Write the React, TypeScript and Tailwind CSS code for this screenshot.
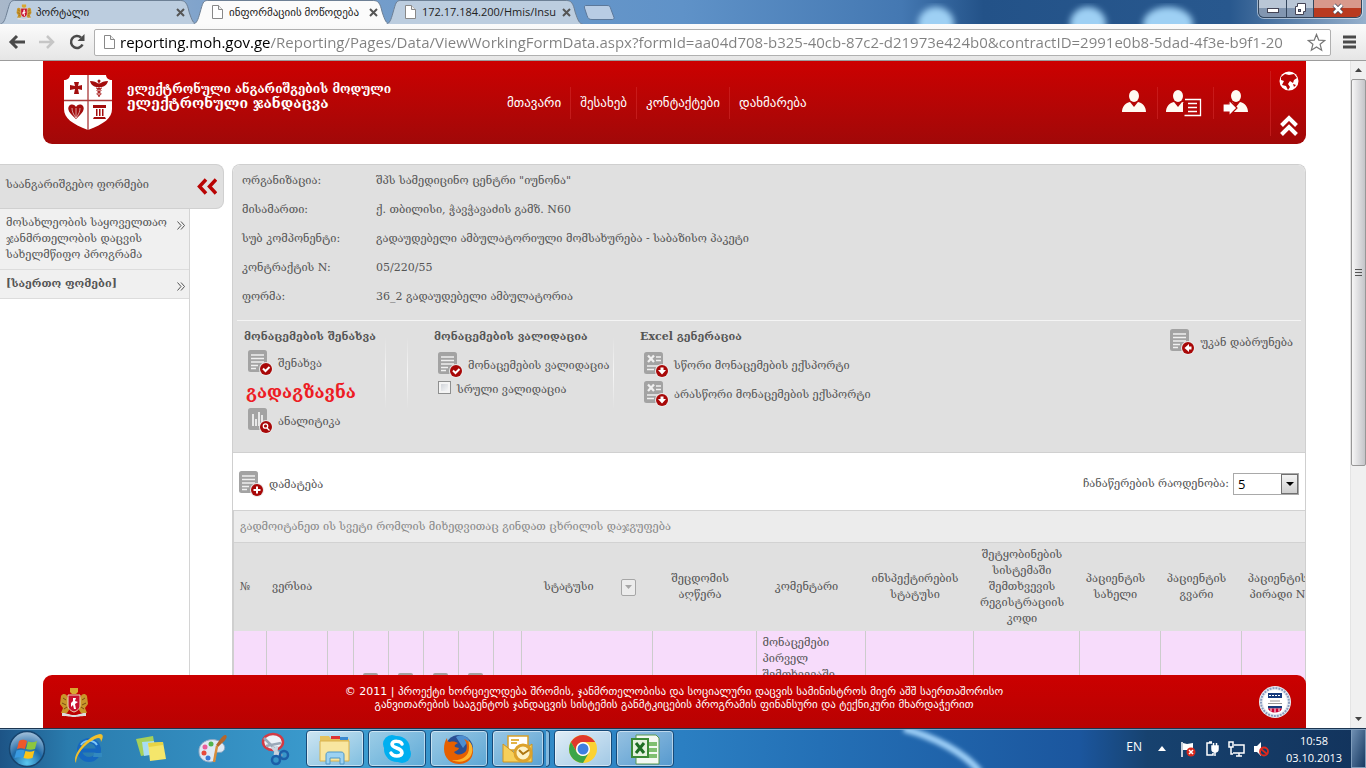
import type { ReactNode } from "react";

const SERIF = "font-['DejaVu_Serif','Noto_Sans',serif]";
const SANS = "font-['DejaVu_Sans','Noto_Sans',sans-serif]";
const UI = "font-['Open_Sans','Noto_Sans','DejaVu_Sans',sans-serif]";

const NAV = ["მთავარი", "შესახებ", "კონტაქტები", "დახმარება"];

const DETAILS = [
  { id: "org", label: "ორგანიზაცია:", value: 'შპს სამედიცინო ცენტრი "იუნონა"' },
  { id: "address", label: "მისამართი:", value: "ქ. თბილისი, ჭავჭავაძის გამზ. N60" },
  {
    id: "sub",
    label: "სუბ კომპონენტი:",
    value: "გადაუდებელი ამბულატორიული მომსახურება - საბაზისო პაკეტი",
  },
  { id: "contract", label: "კონტრაქტის N:", value: "05/220/55" },
  { id: "form", label: "ფორმა:", value: "36_2 გადაუდებელი ამბულატორია" },
];

const COLUMNS = [
  { id: "no", title: "№", width: "w-[32px]", align: "text-left" },
  { id: "version", title: "ვერსია", width: "w-[61px]", align: "text-left" },
  { id: "a", title: "", width: "w-[26px]", align: "text-left" },
  { id: "b", title: "", width: "w-[35px]", align: "text-left", tool: true },
  { id: "c", title: "", width: "w-[35px]", align: "text-left", tool: true },
  { id: "d", title: "", width: "w-[35px]", align: "text-left", tool: true },
  { id: "e", title: "", width: "w-[35px]", align: "text-left", tool: true },
  { id: "f", title: "", width: "w-[28px]", align: "text-left" },
  { id: "status", title: "სტატუსი", width: "w-[131px]", align: "text-center", filter: true },
  { id: "error", title: "შეცდომის აღწერა", width: "w-[104px]", align: "text-center" },
  {
    id: "comment",
    title: "კომენტარი",
    width: "w-[109px]",
    align: "text-center",
    value: "მონაცემები პირველ შემთხვევაში",
  },
  { id: "inspection", title: "ინსპექტირების სტატუსი", width: "w-[108px]", align: "text-center" },
  {
    id: "code",
    title: "შეტყობინების სისტემაში შემთხვევის რეგისტრაციის კოდი",
    width: "w-[106px]",
    align: "text-center",
  },
  { id: "name", title: "პაციენტის სახელი", width: "w-[81px]", align: "text-center" },
  { id: "surname", title: "პაციენტის გვარი", width: "w-[81px]", align: "text-center" },
  { id: "pid", title: "პაციენტის პირადი N", width: "w-[81px]", align: "text-center" },
];

/* Browser frame */

function PageIcon() {
  return (
    <svg width="13" height="16" viewBox="0 0 13 16" className="shrink-0">
      <path d="M1.500 1.500h6l4 4v9h-10z" fill="#fff" stroke="#888" />
      <path d="M7.500 1.500v4h4" fill="#eee" stroke="#888" />
    </svg>
  );
}

function CrestIcon({ size }: { size: number }) {
  return (
    <svg width={size} height={size} viewBox="0 0 30 30" className="shrink-0">
      <path d="M11 1h8v4l-2 2h-4l-2-2z" fill="#d8a72f" />
      <path d="M2 9c2-3 5-2 6 0l2 4v10l-2 3H2l2-5-3-4z" fill="#c9962a" />
      <path d="M28 9c-2-3-5-2-6 0l-2 4v10l2 3h6l-2-5 3-4z" fill="#c9962a" />
      <path d="M4 11l3 2M3 16l4 2M26 11l-3 2M27 16l-4 2M5 22l3-2M25 22l-3-2" stroke="#7a4a12" strokeWidth="1" />
      <path d="M9 8h12v10c0 4-3 6-6 7-3-1-6-3-6-7z" fill="#c8102e" stroke="#e8dcb8" />
      <path d="M14 11h3l-1 3 3 1-3 2 1 5h-2l-1-4-2 2v-4l2-2z" fill="#fff" />
      <path d="M3 26c6 0 7 2 12 2s6-2 12-2v3c-6 0-8 1-12 1s-6-1-12-1z" fill="#ddd" />
    </svg>
  );
}

function Tab({ title, icon, active }: { title: string; icon: ReactNode; active?: boolean }) {
  return (
    <div className="relative -mr-1 flex h-6 w-[197px] min-w-0 shrink items-center gap-1 pl-4 pr-3">
      <svg viewBox="0 0 200 24" preserveAspectRatio="none" className="absolute inset-0 h-full w-full">
        <path
          d="M0 24.500C4 23 5 20 7 13C10 3 10 .5 15 .5H183C188 .5 190 3 192 12C195 21 196 23 200 24.500"
          fill={active ? "#fbfbfb" : "#bccddf"}
          stroke="#6d7f94"
        />
      </svg>
      <span className="relative flex w-4 shrink-0 justify-center">{icon}</span>
      <span className="relative min-w-0 flex-1 overflow-hidden whitespace-nowrap text-[11px] text-[#222]">
        {title}
      </span>
      <button type="button" aria-label="Close" className="relative text-[#555]">
        <svg width="9" height="9" viewBox="0 0 9 9">
          <path d="M1 1l7 7M8 1l-7 7" stroke="currentColor" strokeWidth="2" />
        </svg>
      </button>
    </div>
  );
}

function WindowButtons() {
  return (
    <div className="relative mr-1 flex h-[18px] shrink-0 self-start overflow-hidden rounded-b-md border border-t-0 border-[#34465c] shadow-[0_0_0_1px_rgba(255,255,255,0.5)]">
      <button type="button" aria-label="Minimize" className="flex w-7 items-center justify-center border-r border-[#34465c] bg-linear-to-b from-[#b9c6d6] from-50% to-[#8296b0] to-50%">
        <svg width="14" height="12" viewBox="0 0 14 12">
          <rect x="1.500" y="5.500" width="11" height="4" fill="#fff" stroke="#445" />
        </svg>
      </button>
      <button type="button" aria-label="Restore" className="flex w-[27px] items-center justify-center border-r border-[#34465c] bg-linear-to-b from-[#b9c6d6] from-50% to-[#8296b0] to-50%">
        <svg width="14" height="12" viewBox="0 0 14 12">
          <path d="M4.500.5h8v8h-2v3h-8v-8h2z" fill="#fff" stroke="#445" />
          <rect x="5.500" y="6.500" width="2" height="2" fill="#8296b0" stroke="#445" />
        </svg>
      </button>
      <button type="button" aria-label="Close window" className="flex w-[47px] items-center justify-center bg-linear-to-b from-[#d8998c] from-50% to-[#b93a20] to-50%">
        <svg width="14" height="12" viewBox="0 0 14 12">
          <path d="M3 2l8 8M11 2l-8 8" stroke="#445" strokeWidth="4" />
          <path d="M3 2l8 8M11 2l-8 8" stroke="#fff" strokeWidth="2.500" />
        </svg>
      </button>
    </div>
  );
}

function BrowserFrame() {
  return (
    <div className={`shrink-0 ${UI}`}>
      <div className="relative flex h-6 items-end overflow-hidden">
        <svg viewBox="0 0 1366 24" preserveAspectRatio="none" className="absolute inset-0 h-full w-full">
          <defs>
            <linearGradient id="sky" x1="0" x2="1">
              <stop offset="0" stopColor="#a9b8ca" />
              <stop offset=".15" stopColor="#7fa3cc" />
              <stop offset=".5" stopColor="#5f92c8" />
              <stop offset=".66" stopColor="#4478b2" />
              <stop offset=".72" stopColor="#235288" />
              <stop offset=".9" stopColor="#28588e" />
              <stop offset="1" stopColor="#96b0cc" />
            </linearGradient>
            <filter id="soft">
              <feGaussianBlur stdDeviation="3" />
            </filter>
          </defs>
          <rect width="1366" height="24" fill="url(#sky)" />
          <g fill="#9ed0f4" filter="url(#soft)">
            <ellipse cx="936" cy="24" rx="18" ry="17" />
            <ellipse cx="1088" cy="24" rx="18" ry="17" />
            <ellipse cx="1168" cy="24" rx="25" ry="17" />
          </g>
        </svg>
        <Tab title="პორტალი" icon={<CrestIcon size={16} />} />
        <Tab title="ინფორმაციის მოწოდება" icon={<PageIcon />} active />
        <Tab title="172.17.184.200/Hmis/Insu" icon={<PageIcon />} />
        <button type="button" aria-label="New tab" className="relative mb-1 ml-1 shrink-0">
          <svg width="32" height="15" viewBox="0 0 32 15">
            <path d="M3 .5h21c3 0 3 1 4 4l3 8c0 2-1 2-2 2H9c-3 0-4-1-5-4L1.500 3C1 1 2 .5 3 .5z" fill="#b8cce4" stroke="#5c789a" />
          </svg>
        </button>
        <div className="flex-1" />
        <WindowButtons />
      </div>
      <div className="flex h-[37px] items-center border-b border-[#9c9c9c] bg-linear-to-b from-[#fbfbfb] to-[#e6e6e6] pl-2 pr-2.5">
        <button type="button" aria-label="Back" className="mr-3">
          <svg width="18" height="16" viewBox="0 0 18 16" fill="none" stroke="#4a4a4a" strokeWidth="3">
            <path d="M17 8H4M9 2L3 8l6 6" />
          </svg>
        </button>
        <button type="button" aria-label="Forward" className="mr-3">
          <svg width="18" height="16" viewBox="0 0 18 16" fill="none" stroke="#c6c6c6" strokeWidth="2.500">
            <path d="M1 8h13M9 2l6 6-6 6" />
          </svg>
        </button>
        <button type="button" aria-label="Reload" className="mr-2">
          <svg width="18" height="18" viewBox="0 0 18 18" fill="none" stroke="#4a4a4a" strokeWidth="2.500">
            <path d="M14.500 11.500A6 6 0 1 1 13 4.500" />
            <path d="M16.500 1v7H9.500z" fill="#4a4a4a" stroke="none" />
          </svg>
        </button>
        <div className="flex h-[27px] min-w-0 flex-1 items-center gap-1 rounded-xs border border-[#b0b0b0] bg-white pl-2 pr-1">
          <PageIcon />
          <input
            aria-label="Address"
            readOnly
            value="reporting.moh.gov.ge/Reporting/Pages/Data/ViewWorkingFormData.aspx?formId=aa04d708-b325-40cb-87c2-d21973e424b0&contractID=2991e0b8-5dad-4f3e-b9f1-20"
            className="min-w-0 flex-1 bg-linear-to-r from-black from-[150px] to-[#808080] to-[150px] bg-clip-text text-[15px] text-transparent outline-none"
          />
          <button type="button" aria-label="Bookmark">
            <svg width="19" height="19" viewBox="0 0 20 20">
              <path d="M10 1.500l2.400 6 6.200.4-4.800 4 1.600 6.200L10 14.700l-5.400 3.400 1.600-6.200-4.800-4 6.200-.4z" fill="#fff" stroke="#777" strokeWidth="1.300" />
            </svg>
          </button>
        </div>
        <button type="button" aria-label="Menu" className="ml-3">
          <svg width="13" height="14" viewBox="0 0 13 14">
            <path d="M0 2h13M0 7h13M0 12h13" stroke="#4a4a4a" strokeWidth="3" />
          </svg>
        </button>
      </div>
    </div>
  );
}

/* Site header */

function ShieldLogo() {
  return (
    <svg width="50" height="57" viewBox="0 0 50 57" className="shrink-0">
      <path d="M7 1h36c0 3 3 5 6 5v29c0 9-8 15-24 21C9 50 1 44 1 35V6c3 0 6-2 6-5z" fill="#fff" />
      <path d="M25 1v55M1 26.500h48" stroke="#a93a3a" strokeWidth="1.300" />
      <g fill="#a30d0d">
        <path d="M11 8h5l-1 4 4-1v5l-4-1 1 5h-5l1-5-5 1v-5l5 1z" />
        <path d="M6 32c2-2 5-2 7 1 2-3 5-3 7-1 2 3 0 7-7 13-7-6-9-10-7-13z" />
        <path d="M30 31h13v3H30zM31 43h11l1 2H30zM33 35h1.500v7H33zM36 35h1.500v7H36zM39 35h1.500v7H39z" />
        <path d="M27 7c4 0 6 1 9 3 3-2 5-3 9-3-1 4-4 6-8 6h-2c-4 0-7-2-8-6z" />
      </g>
      <circle cx="36" cy="7" r="1.500" fill="#a30d0d" />
      <path d="M36 8v15M33 14c6 1 6 3 3 4s-2 3 0 4M39 14c-6 1-6 3-3 4s2 3 0 4" stroke="#a30d0d" fill="none" />
      <path d="M13 44c-3-4-4-7-4-10M13 44c3-4 4-7 4-10M13 44V34" stroke="#fff" strokeWidth=".6" fill="none" />
    </svg>
  );
}

function UserIcon({ variant }: { variant?: "list" | "arrow" }) {
  return (
    <svg width="38" height="28" viewBox="0 0 38 28" className="shrink-0 overflow-visible">
      <g fill="#fffaf2">
        <ellipse cx="12" cy="7" rx="5" ry="6" />
        <path d="M0 23c0-5 3-9 8-10l4 5 4-5c5 1 8 5 8 10z" />
      </g>
      {variant === "list" && (
        <g>
          <path d="M20 11h16v16H19v-3h-2V14z" fill="#b40606" />
          <path d="M19 10.500h15.500v16H18.500M22 14.500h9M22 18.500h9M22 22.500h9" stroke="#fff" strokeWidth="1.300" fill="none" />
        </g>
      )}
      {variant === "arrow" && (
        <path d="M-1 15h6v-4l8 8-8 8v-4h-6z" fill="#fff" stroke="#b40606" strokeWidth="1.200" />
      )}
    </svg>
  );
}

function SiteHeader() {
  return (
    <header className="ml-[43px] mr-[44px] flex h-[83px] shrink-0 rounded-b-[9px] bg-linear-to-b from-[#cc0000] to-[#a10808] text-white">
      <div className="flex w-[448px] shrink-0 items-center gap-3.5 pl-5">
        <ShieldLogo />
        <div className={`mb-3.5 whitespace-nowrap font-bold ${SERIF}`}>
          <p className="text-xs leading-[14px]">ელექტრონული ანგარიშგების მოდული</p>
          <p className="text-sm leading-[14px]">ელექტრონული ჯანდაცვა</p>
        </div>
      </div>
      <nav className={`flex items-center text-[13px] ${SANS}`}>
        {NAV.map((item) => (
          <a key={item} href="#" className="flex h-8 items-center border-r border-[#d12a2a]/60 px-[9px] first:pl-4 last:border-0">
            {item}
          </a>
        ))}
      </nav>
      <div className="flex-1" />
      <div className="flex items-center divide-x divide-[#d12a2a]/60">
        <a href="#" aria-label="User" className="flex h-8 w-9 items-center">
          <UserIcon />
        </a>
        <a href="#" aria-label="Profile" className="flex h-8 w-14 items-center pl-2">
          <UserIcon variant="list" />
        </a>
        <a href="#" aria-label="Log in" className="flex h-8 w-14 items-center pl-2.5">
          <UserIcon variant="arrow" />
        </a>
      </div>
      <div className="mb-2 mt-2.5 flex w-9 flex-col items-center justify-between border-l border-[#d12a2a]/60">
        <a href="#" aria-label="Language">
          <svg width="20" height="20" viewBox="0 0 20 20">
            <circle cx="10" cy="10" r="9.500" fill="#fff" />
            <path d="M2 6l4-3 4 1 5-1 3 4-3 2-1 3-3-2-2 3 2 3-2 3-2-4-4-1 2-4-3-1z" fill="#b80404" />
            <path d="M14 13l3 1-2 2z" fill="#b80404" />
          </svg>
        </a>
        <a href="#" aria-label="Collapse header">
          <svg width="18" height="21" viewBox="0 0 18 21" fill="none" stroke="#fff" strokeWidth="4">
            <path d="M1.500 10.500L9 3l7.500 7.500M1.500 19.500L9 12l7.500 7.500" />
          </svg>
        </a>
      </div>
    </header>
  );
}

/* Sidebar */

function SideItem({ children }: { children: ReactNode }) {
  return (
    <a href="#" className="flex items-start justify-between border-b border-[#dcdcdc] bg-[#f0f0f0] py-1.5 pl-1.5 pr-1">
      <span className="flex-1">{children}</span>
      <svg width="8" height="9" viewBox="0 0 8 9" fill="none" stroke="#555" className="mt-1.5 shrink-0">
        <path d="M.5.5l3.500 4-3.500 4M4 .5l3.500 4-3.500 4" />
      </svg>
    </a>
  );
}

function Sidebar() {
  return (
    <aside className="w-56 shrink-0">
      <div className="flex h-full w-[190px] flex-col border-r border-[#d4d4d4]">
        <div className="-mr-[35px] flex h-[45px] shrink-0 items-center justify-between rounded-r-lg border border-l-0 border-[#d0d0d0] bg-[#e0e0e0] pl-1.5 pr-1.5">
          <h2 className="pb-1">საანგარიშგებო ფორმები</h2>
          <button type="button" aria-label="Collapse menu">
            <svg width="20" height="17" viewBox="0 0 20 17" fill="none" stroke="#b90404" strokeWidth="3.500">
              <path d="M9 1.500L2.500 8.500 9 15.500M19 1.500L12.500 8.500l6.500 7" />
            </svg>
          </button>
        </div>
        <SideItem>მოსახლეობის საყოველთაო ჯანმრთელობის დაცვის სახელმწიფო პროგრამა</SideItem>
        <SideItem>
          <b>[საერთო ფომები]</b>
        </SideItem>
      </div>
    </aside>
  );
}

/* Main panel */

type Badge = "check" | "search" | "plus" | "down" | "left";

const BADGES: Record<Badge, ReactNode> = {
  check: <path d="M15 18.500l2.500 2.500 4-4" fill="none" stroke="#fff" strokeWidth="2" />,
  search: (
    <g fill="none" stroke="#fff" strokeWidth="1.300">
      <circle cx="17.500" cy="18" r="2.200" />
      <path d="M19 20l2.500 2.500" />
    </g>
  ),
  plus: <path d="M18 15.500v7M14.500 19h7" stroke="#fff" strokeWidth="2" />,
  down: <path d="M16.500 15.500h3V18h2.500L18 22.500 14 18h2.500z" fill="#fff" />,
  left: <path d="M21.500 17.500h-2.500V15L14.500 19l4.500 4v-2.500h2.500z" fill="#fff" />,
};

function DocIcon({ badge, kind = "text" }: { badge: Badge; kind?: "text" | "excel" | "chart" }) {
  return (
    <svg width="25" height="26" viewBox="0 0 25 26" className="shrink-0">
      <rect width="19" height="22" rx="2.500" fill="#a3a3a3" />
      {kind === "text" && <path d="M3 5h13M3 8.500h13M3 12h13M3 15.500h7M3 18.500h5" stroke="#f0f0f0" strokeWidth="1.300" />}
      {kind === "excel" && (
        <g stroke="#f0f0f0" fill="none">
          <path d="M4 3.500l6 6.500M10 3.500L4 10" strokeWidth="2.300" />
          <path d="M12 5h5M12 8.500h5M3 14h13M3 17.500h7" strokeWidth="1.300" />
        </g>
      )}
      {kind === "chart" && <path d="M5 6v12M8 11v7M11 4v14M14 7v8" stroke="#f0f0f0" strokeWidth="1.800" />}
      <circle cx="18" cy="19" r="7" fill="#e8e8e8" />
      <circle cx="18" cy="19" r="6" fill="#a80808" />
      {BADGES[badge]}
    </svg>
  );
}

function ToolButton({ label, badge, kind }: { label: string; badge: Badge; kind?: "text" | "excel" | "chart" }) {
  return (
    <button type="button" className="flex items-center gap-[5px] whitespace-nowrap">
      <DocIcon badge={badge} kind={kind} />
      <span className="pt-0.5">{label}</span>
    </button>
  );
}

function Divider() {
  return <div className="mt-2 h-[72px] w-px shrink-0 bg-linear-to-b from-transparent via-white/70 to-transparent" />;
}

function ActionBar() {
  return (
    <section className="mx-1 mt-2 flex h-[132px] items-start border-t border-[#f4f4f4] pl-[7px] pr-2 pt-2">
      <div className="flex w-[141px] shrink-0 flex-col items-start">
        <h3 className="whitespace-nowrap font-bold">მონაცემების შენახვა</h3>
        <div className="mt-[5px] pl-1">
          <ToolButton label="შენახვა" badge="check" />
        </div>
        <button type="button" className="my-0.5 h-7 pl-0.5 text-[17px] font-bold text-[#ed1c24]">
          გადაგზავნა
        </button>
        <div className="pl-1">
          <ToolButton label="ანალიტიკა" badge="search" kind="chart" />
        </div>
      </div>
      <Divider />
      <div className="w-[21px] shrink-0" />
      <Divider />
      <div className="ml-[26px] flex w-[179px] shrink-0 flex-col items-start">
        <h3 className="whitespace-nowrap font-bold">მონაცემების ვალიდაცია</h3>
        <div className="mt-[7px] pl-1">
          <ToolButton label="მონაცემების ვალიდაცია" badge="check" />
        </div>
        <label className="mt-0.5 flex items-start gap-1.5 whitespace-nowrap pl-1">
          <input
            type="checkbox"
            className="mt-px size-[13px] appearance-none border border-[#8e8f8f] bg-linear-to-br from-[#c8ccd2] to-white shadow-[inset_0_0_0_2px_#f4f4f4]"
          />
          <span className="pt-0.5">სრული ვალიდაცია</span>
        </label>
      </div>
      <Divider />
      <div className="ml-[26px] flex flex-col items-start">
        <h3 className="whitespace-nowrap font-bold">Excel გენერაცია</h3>
        <div className="mt-[7px] flex flex-col gap-[3px] pl-1">
          <ToolButton label="სწორი მონაცემების ექსპორტი" badge="down" kind="excel" />
          <ToolButton label="არასწორი მონაცემების ექსპორტი" badge="down" kind="excel" />
        </div>
      </div>
      <div className="flex-1" />
      <ToolButton label="უკან დაბრუნება" badge="left" />
    </section>
  );
}

function DataGrid() {
  return (
    <div className="overflow-hidden border-l border-[#cfcfcf]">
      <div className="border-y border-[#d2d2d2] bg-[#ececec] px-1.5 pb-[7px] pt-2 text-[#888]">
        გადმოიტანეთ ის სვეტი რომლის მიხედვითაც გინდათ ცხრილის დაჯგუფება
      </div>
      <table className="w-full min-w-[1088px] table-fixed border-collapse">
        <colgroup>
          {COLUMNS.map((col) => (
            <col key={col.id} className={col.width} />
          ))}
        </colgroup>
        <thead className="bg-[#e0e0e0]">
          <tr>
            {COLUMNS.map((col) => (
              <th key={col.id} className={`py-1 pl-1 pr-3 font-normal first:pl-1.5 nth-[2]:pl-1.5 ${col.align}`}>
                {col.filter ? (
                  <span className="flex items-center justify-between pl-[19px] pr-1">
                    {col.title}
                    <button type="button" aria-label="Filter" className="flex h-[17px] w-[15px] items-center justify-center rounded-xs border border-[#a6a6a6] bg-[#ececec]">
                      <svg width="7" height="4" viewBox="0 0 7 4">
                        <path d="M0 0h7L3.500 4z" fill="#a6a6a6" />
                      </svg>
                    </button>
                  </span>
                ) : (
                  col.title
                )}
              </th>
            ))}
          </tr>
        </thead>
        <tbody>
          <tr className="bg-[#f7dcfb]">
            {COLUMNS.map((col) => (
              <td key={col.id} className="h-24 border-r border-[#cccccc] px-1.5 py-1 align-top">
                {col.value}
                {col.tool && (
                  <svg width="15" height="18" viewBox="0 0 15 18" className="mx-auto mt-[38px]">
                    <rect width="15" height="18" rx="2" fill="#a3a3a3" />
                    <path d="M3 5h9M3 9h9M3 13h6" stroke="#f0f0f0" />
                  </svg>
                )}
              </td>
            ))}
          </tr>
        </tbody>
      </table>
    </div>
  );
}

function MainPanel() {
  return (
    <main className="ml-2 mr-[44px] min-w-0 flex-1 overflow-hidden rounded-t-lg border border-b-0 border-[#cfcfcf]">
      <div className="border-b border-[#d0d0d0] bg-[#e0e0e0] pt-px">
        <dl className="pb-px pl-[9px] leading-[29px]">
          {DETAILS.map((row) => (
            <div key={row.id} className="flex">
              <dt className="w-[134px] shrink-0">{row.label}</dt>
              <dd>{row.value}</dd>
            </div>
          ))}
        </dl>
        <ActionBar />
      </div>
      <div className="flex h-[57px] items-center justify-between bg-white pl-1.5 pr-1.5 pt-1">
        <div className="pt-px">
          <ToolButton label="დამატება" badge="plus" />
        </div>
        <div className="flex items-center gap-1">
          <label htmlFor="page-size">ჩანაწერების რაოდენობა:</label>
          <div className="relative">
            <select
              id="page-size"
              className={`block h-[22px] w-[66px] appearance-none border border-[#a9a9a9] bg-white pl-1 text-[13px] text-black ${UI}`}
            >
              <option>5</option>
              <option>10</option>
              <option>20</option>
            </select>
            <span className="pointer-events-none absolute right-px top-px flex h-5 w-[17px] items-center justify-center border border-[#707070] bg-linear-to-b from-[#f4f4f4] to-[#cfcfcf]">
              <svg width="8" height="4" viewBox="0 0 8 4">
                <path d="M0 0h8L4 4z" fill="#000" />
              </svg>
            </span>
          </div>
        </div>
      </div>
      <DataGrid />
    </main>
  );
}

function SiteFooter() {
  return (
    <footer className={`absolute bottom-0 left-[43px] right-[44px] flex h-[53px] items-center justify-between rounded-t-[9px] bg-linear-to-b from-[#cb0000] to-[#b80202] pl-4 pr-[15px] text-white ${SANS}`}>
      <CrestIcon size={30} />
      <p className="mb-2 text-center text-[11px] leading-[13px]">
        © 2011 | პროექტი ხორციელდება შრომის, ჯანმრთელობისა და სოციალური დაცვის სამინისტროს მიერ აშშ საერთაშორისო
        <br />
        განვითარების სააგენტოს ჯანდაცვის სისტემის განმტკიცების პროგრამის ფინანსური და ტექნიკური მხარდაჭერით
      </p>
      <svg width="32" height="42" viewBox="0 0 32 32" className="shrink-0">
        <circle cx="16" cy="16" r="16" fill="#e8ecf2" />
        <circle cx="16" cy="16" r="14" fill="none" stroke="#8a9cc0" strokeWidth="2" strokeDasharray="2 1" />
        <circle cx="16" cy="16" r="12" fill="#fff" />
        <path d="M9 7h14v5H9z" fill="#153a7c" />
        <path d="M10 9.500h12" stroke="#fff" strokeDasharray="2 1" />
        <path d="M11 15h10M9 17.500h14" stroke="#999" />
        <path d="M9 20h14v2.500H9z" fill="#153a7c" />
        <path d="M9 22.500h14c-1 3-4 4-7 4s-6-1-7-4z" fill="#c03" />
        <path d="M12 22.500v3M16 22.500v4M20 22.500v3" stroke="#fff" />
      </svg>
    </footer>
  );
}

function ScrollBar() {
  return (
    <div className="flex w-4 shrink-0 flex-col items-center border-l border-[#e4e4e4] bg-[#f0f0f0]">
      <svg width="7" height="18" viewBox="0 0 7 18" className="shrink-0">
        <path d="M0 11h7L3.500 7z" fill="#444" />
      </svg>
      <div className="flex h-[58%] w-[15px] items-center justify-center rounded-xs border border-[#979797] bg-linear-to-r from-[#f6f6f6] to-[#c4c5c9]">
        <svg width="7" height="8" viewBox="0 0 7 8">
          <path d="M0 1.500h7M0 4.500h7M0 7.500h7" stroke="#555" />
        </svg>
      </div>
      <div className="flex-1" />
      <svg width="7" height="18" viewBox="0 0 7 18" className="shrink-0">
        <path d="M0 7h7l-3.500 4z" fill="#444" />
      </svg>
    </div>
  );
}

/* Taskbar */

const ieIcon = (
  <svg width="34" height="34" viewBox="0 0 34 34">
    <circle cx="17" cy="18" r="9.500" fill="none" stroke="#1668c0" strokeWidth="5" />
    <path d="M9 18.500h18" stroke="#1668c0" strokeWidth="4" />
    <path d="M22 21h8v4h-9z" fill="#3289c0" />
    <path d="M9 13c3-5 12-6 16 0" stroke="#7cc8fa" strokeWidth="2" fill="none" />
    <path d="M4 31C-1 24 15 4 28 2c4 0 3 4 1 8 0-4-2-5-6-3C12 12 4 23 4 31z" fill="#f0c02c" />
  </svg>
);

const notesIcon = (
  <svg width="34" height="34" viewBox="0 0 34 34">
    <path d="M2 7l17-3 3 17-15 3z" fill="#a6d05a" />
    <path d="M8 10l12-1 2 13-12 2z" fill="#a8dcf4" />
    <path d="M14 11l15-1 3 17-16 2z" fill="#f5e66b" />
    <path d="M14 11l15-1v3l-14 2z" fill="#e8d444" />
  </svg>
);

const paintIcon = (
  <svg width="34" height="34" viewBox="0 0 34 34">
    <path d="M3 20C2 11 12 6 20 8c9 2 11 9 6 12-3 1-7-1-7 3 1 3 1 7-5 7C8 30 3 26 3 20z" fill="#dfe9f4" stroke="#8ea9c4" />
    <circle cx="9" cy="15" r="2.500" fill="#e85d9c" />
    <circle cx="15" cy="12" r="2.500" fill="#52b34c" />
    <circle cx="8" cy="21" r="2.500" fill="#e84a3a" />
    <circle cx="12" cy="26" r="2.500" fill="#3b7ad6" />
    <path d="M30 3c3 3-4 8-8 12l-2-2C23 9 27 2 30 3z" fill="#b4662c" />
    <path d="M21 14l-3 16" stroke="#d88c3a" strokeWidth="2.500" />
  </svg>
);

const snipIcon = (
  <svg width="34" height="34" viewBox="0 0 34 34">
    <ellipse cx="15" cy="10" rx="10" ry="8" fill="#edf2f8" stroke="#d33a44" strokeWidth="2.500" />
    <path d="M6 6l18 18M8 14l15-3" stroke="#9aa8b8" strokeWidth="2.500" />
    <path d="M14 15l7 8M19 14l-2 9" stroke="#c9d3de" strokeWidth="3" />
    <circle cx="26" cy="23" r="4" fill="none" stroke="#1c5fa8" strokeWidth="2.500" />
    <circle cx="18" cy="28" r="4" fill="none" stroke="#1c5fa8" strokeWidth="2.500" />
  </svg>
);

const explorerIcon = (
  <svg width="34" height="34" viewBox="0 0 34 34">
    <path d="M2 4h9l2 3h18v22H2z" fill="#e5c25e" />
    <path d="M13 4h9v3h-9z" fill="#d33" />
    <path d="M22 5h8v3h-8z" fill="#3a8ad0" />
    <path d="M2 9h29v20H2z" fill="#f8e6a0" stroke="#d9b24d" />
    <path d="M8 32V23c0-2 1-3 3-3h12c2 0 3 1 3 3v9h-4v-6H12v6z" fill="#9cd2f2" stroke="#4f98c8" />
  </svg>
);

const skypeIcon = (
  <svg width="34" height="34" viewBox="0 0 34 34">
    <circle cx="12" cy="12" r="9" fill="#00aff0" />
    <circle cx="22" cy="22" r="9" fill="#00aff0" />
    <circle cx="17" cy="17" r="13" fill="#00aff0" />
    <path d="M22 12c-1-3-9-4-10 0 0 5 10 3 10 9-1 4-9 4-11 0" stroke="#fff" strokeWidth="3.500" fill="none" strokeLinecap="round" />
  </svg>
);

const firefoxIcon = (
  <svg width="34" height="34" viewBox="0 0 34 34">
    <circle cx="17" cy="17" r="14" fill="#2b4f94" />
    <path d="M14 5c5-3 11-1 13 3l-6 8z" fill="#4d8ed0" />
    <path d="M5 6c0 3 1 4 3 4 3-1 6 0 8 1-2 1-4 2-3 4l4 1c-1 3-4 3-5 4 3 4 9 3 12-1 2-5 0-10-2-12 6 2 9 8 9 12 0 8-6 13-14 13S2 26 2 17C2 12 3 9 5 6z" fill="#e66000" />
    <path d="M26 8c5 4 6 11 2 17-4 5-12 6-18 3 10 1 17-4 17-12 0-3 0-5-1-8z" fill="#ffb52e" />
  </svg>
);

const outlookIcon = (
  <svg width="34" height="34" viewBox="0 0 34 34">
    <path d="M7 4h20v14H7z" fill="#fff" stroke="#d8a02a" strokeWidth="1.500" />
    <path d="M10 8h8M10 11h6" stroke="#e2b347" strokeWidth="2" />
    <path d="M2 12l14 11 15-11v18H2z" fill="#f6cf5a" stroke="#cf9420" />
    <circle cx="22" cy="21" r="8" fill="#fdf2c8" stroke="#dca22c" strokeWidth="3" />
    <path d="M18 18l4 4 6-4" stroke="#ae7611" strokeWidth="2" fill="none" />
  </svg>
);

const chromeIcon = (
  <svg width="34" height="34" viewBox="0 0 34 34">
    <circle cx="17" cy="17" r="14" fill="#fbd232" />
    <path d="M4.900 10A14 14 0 0 1 29.100 10H17a7 7 0 0 0-6 10.500z" fill="#e0392b" />
    <path d="M4.900 10A14 14 0 0 0 17 31l6-10.500a7 7 0 0 1-12 0z" fill="#3ba548" />
    <circle cx="17" cy="17" r="7" fill="#fff" />
    <circle cx="17" cy="17" r="5.500" fill="#3f7fe0" />
  </svg>
);

const excelIcon = (
  <svg width="34" height="34" viewBox="0 0 34 34">
    <path d="M8 3h20l3 3v26H8z" fill="#f3f8f2" stroke="#5a9a52" />
    <path d="M20 10h9v4h-9zM20 16h9v4h-9zM20 22h9v4h-9z" fill="#7fbf70" />
    <rect x="3" y="6" width="18" height="20" fill="#3b8a35" />
    <rect x="5" y="8" width="14" height="16" fill="#e4f2df" />
    <path d="M8 11l8 10M16 11l-8 10" stroke="#1d6e23" strokeWidth="3" />
  </svg>
);

const PINNED = [
  { name: "Internet Explorer", icon: ieIcon },
  { name: "Sticky Notes", icon: notesIcon },
  { name: "Paint", icon: paintIcon },
  { name: "Snipping Tool", icon: snipIcon },
];

const RUNNING = [
  { name: "Explorer", icon: explorerIcon, look: "from-white/75 to-white/35" },
  { name: "Skype", icon: skypeIcon, look: "from-white/50 to-white/20" },
  { name: "Firefox", icon: firefoxIcon, look: "from-white/50 to-white/20" },
  { name: "Outlook", icon: outlookIcon, look: "from-white/50 to-white/20", stacked: true },
  { name: "Chrome", icon: chromeIcon, look: "from-white/85 to-white/55" },
  { name: "Excel", icon: excelIcon, look: "from-white/50 to-white/20" },
];

function StartOrb() {
  return (
    <svg width="38" height="38" viewBox="0 0 38 38">
      <defs>
        <radialGradient id="orb" cx=".5" cy=".9" r=".9">
          <stop offset="0" stopColor="#5cc8f0" />
          <stop offset=".5" stopColor="#1f6aa8" />
          <stop offset="1" stopColor="#a8c4dc" />
        </radialGradient>
      </defs>
      <circle cx="19" cy="19" r="17.500" fill="url(#orb)" stroke="#17456f" strokeWidth="1.500" />
      <path d="M11 11c3-2 6-1 8 0l-2 8c-3-1-6-1-8 0z" fill="#f0582a" />
      <path d="M20 11.500c3 1 6 1 9-.5l-2 8c-3 1-6 1-9 0z" fill="#8cc63f" />
      <path d="M8.500 20.500c3-1 6-1 8 0L14.500 28c-2-1-5-1-8 0z" fill="#3a9ae0" />
      <path d="M17.500 21c3 1 6 1 9-.5l-2 7.500c-3 1-6 1-9 0z" fill="#fcc419" />
    </svg>
  );
}

function Taskbar() {
  return (
    <footer className={`relative flex h-10 shrink-0 items-center overflow-hidden border-t border-[#1c3550] text-xs text-white ${UI}`}>
      <svg viewBox="0 0 1366 40" preserveAspectRatio="none" className="absolute inset-0 h-full w-full">
        <defs>
          <linearGradient id="bar" x1="0" x2="1">
            <stop offset="0" stopColor="#1d5486" />
            <stop offset=".05" stopColor="#2a7cae" />
            <stop offset=".25" stopColor="#3c9dd0" />
            <stop offset=".5" stopColor="#2b7fc2" />
            <stop offset=".6" stopColor="#2470b6" />
            <stop offset=".79" stopColor="#1b569e" />
            <stop offset=".84" stopColor="#17426f" />
            <stop offset="1" stopColor="#12335c" />
          </linearGradient>
          <filter id="glow">
            <feGaussianBlur stdDeviation="2" />
          </filter>
        </defs>
        <rect width="1366" height="40" fill="url(#bar)" />
        <path d="M904 0c30 8 60 24 76 44" stroke="#9fd0f8" strokeWidth="7" fill="none" filter="url(#glow)" />
        <path d="M0 .5h1366" stroke="#8fb4d4" strokeOpacity=".8" />
      </svg>
      <button type="button" aria-label="Start" className="relative ml-2 mr-3">
        <StartOrb />
      </button>
      <div className="relative flex">
        {PINNED.map((app) => (
          <button key={app.name} type="button" aria-label={app.name} className="flex w-[62px] justify-center">
            {app.icon}
          </button>
        ))}
      </div>
      <div className="relative flex h-full gap-1 py-px">
        {RUNNING.map((app) => (
          <div key={app.name} className="flex w-[58px] gap-0.5">
            <button
              type="button"
              aria-label={app.name}
              className={`flex min-w-0 flex-1 items-center justify-center rounded-sm border border-[#174a78] bg-linear-to-br shadow-[inset_0_0_0_1px_rgba(255,255,255,0.5)] ${app.look}`}
            >
              {app.icon}
            </button>
            {app.stacked && <span className="w-1 rounded-r-sm border border-l-0 border-[#174a78] bg-white/40" />}
          </div>
        ))}
      </div>
      <div className="flex-1" />
      <div className="relative flex items-center gap-2">
        <span className="mb-1 mr-2">EN</span>
        <svg width="8" height="5" viewBox="0 0 8 5" className="mr-1.5">
          <path d="M0 5h8L4 0z" fill="#fff" />
        </svg>
        <svg width="16" height="16" viewBox="0 0 16 16">
          <path d="M2 1v15" stroke="#fff" strokeWidth="1.500" />
          <path d="M3 2l4 1 6-1v7H3z" fill="#fff" />
          <circle cx="11" cy="11" r="4.500" fill="#d8281c" />
          <path d="M9 9l4 4M13 9l-4 4" stroke="#fff" strokeWidth="1.500" />
        </svg>
        <svg width="16" height="16" viewBox="0 0 16 16" fill="none" stroke="#fff" strokeWidth="1.500">
          <path d="M8 2H3v12h6v-2M5 1h3" />
          <path d="M8 5h6v3c0 2-1 3-3 3S8 10 8 8z" fill="#fff" />
          <path d="M9.500 2v3M12.500 2v3M11 11v4" />
        </svg>
        <svg width="17" height="16" viewBox="0 0 17 16" fill="none" stroke="#fff" strokeWidth="1.500">
          <path d="M6 4h10v8H5M8 15h6M11 12v3M3 6v7h2" />
          <path d="M1 1h4v5H1z" />
        </svg>
        <svg width="16" height="16" viewBox="0 0 16 16">
          <path d="M1 5h3l4-4v14l-4-4H1z" fill="#fff" />
          <circle cx="11" cy="10.500" r="4" fill="none" stroke="#e0281c" strokeWidth="1.800" />
          <path d="M8 8l6 5" stroke="#e0281c" strokeWidth="1.800" />
        </svg>
        <div className="w-[74px] text-center text-[11px] leading-[17px]">
          <p>10:58</p>
          <p>03.10.2013</p>
        </div>
      </div>
      <button type="button" aria-label="Show desktop" className="relative h-full w-[15px] border border-[#7f9cba] bg-linear-to-br from-[#6f8fb2] to-[#173a62]" />
    </footer>
  );
}

export default function App() {
  return (
    <div className="flex h-screen flex-col overflow-hidden bg-white">
      <BrowserFrame />
      <div className="flex min-h-0 flex-1">
        <div className={`relative flex min-w-0 flex-1 flex-col overflow-hidden text-[11px] leading-4 text-[#555] ${SERIF}`}>
          <SiteHeader />
          <div className="mt-5 flex min-h-0 flex-1">
            <Sidebar />
            <MainPanel />
          </div>
          <SiteFooter />
        </div>
        <ScrollBar />
      </div>
      <Taskbar />
    </div>
  );
}
